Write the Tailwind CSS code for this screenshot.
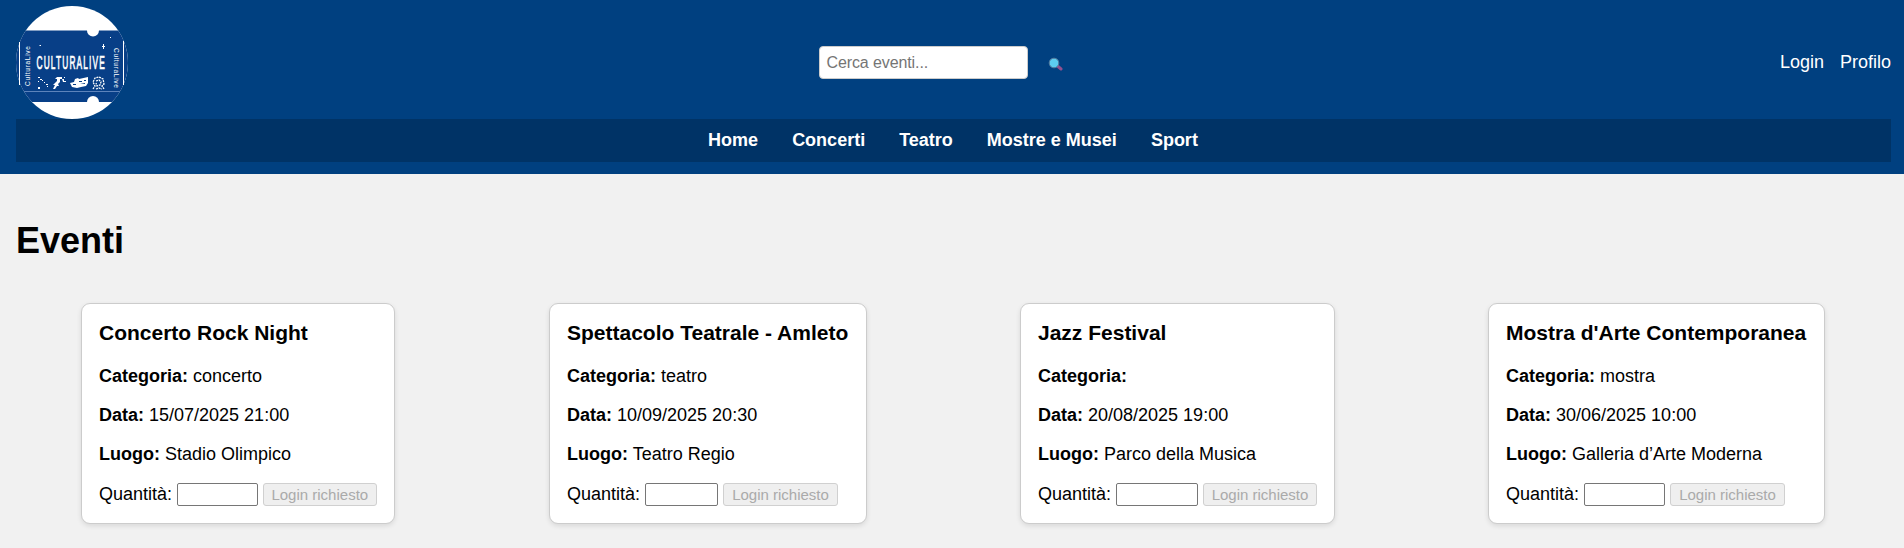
<!DOCTYPE html>
<html lang="it">
<head>
<meta charset="utf-8">
<title>Culturalive - Eventi</title>
<script src="https://cdn.jsdelivr.net/npm/@tailwindcss/browser@4"></script>
</head>
<body class="min-h-screen bg-[#f1f1f1] text-black text-lg leading-5" style="font-family:'Liberation Sans',Arial,sans-serif">
<header class="h-[174px] bg-[#004080] pl-4 pr-[13px] pt-1.5 text-white">
  <div class="flex h-[113px] items-center justify-between">
    <div class="w-[112px]">
      <svg class="block h-[113px] w-[112px] overflow-visible" viewBox="16 6 112 113">
        <defs><clipPath id="c"><ellipse cx="72" cy="62.5" rx="56" ry="56.5"/></clipPath></defs>
        <g clip-path="url(#c)">
          <rect x="16" y="6" width="112" height="113" fill="#fff"/>
          <rect x="16" y="30.500" width="112" height="71.500" fill="#083f87"/>
          <circle cx="93" cy="30.500" r="6" fill="#fff"/>
          <circle cx="93" cy="102" r="6" fill="#fff"/>
          <path d="M24 91.500H120" stroke="#5d83bb"/>
        </g>
        <path d="M19.500 42V85M123.500 41V85" stroke="#fff"/>
        <g fill="#fff">
          <text transform="translate(36.500 68.500) scale(.463 1)" font-size="18" letter-spacing="2.500" stroke="#fff" stroke-width=".7">CULTURALIVE</text>
          <text transform="translate(30 86) rotate(-90)" font-size="6.500" letter-spacing=".7">CulturaLive</text>
          <text transform="translate(114 48) rotate(90)" font-size="6.500" letter-spacing=".7">CulturaLive</text>
          <path d="M103 44h1v2h1v1h-1v2h-1v-2h-1v-1h1zM39 46l1-1h1v1zM110 37h1v1h-1z"/>
          <path d="M38 77h2v1h-2zM40 79h2v1h-2zM38 81h1v1h-1zM38 87h2v2h-2zM44 82h1v1h-1zM46 84h2v1h-2zM42 80h1v1h-1zM47 86h1v1h-1z"/>
          <path d="M57 77h5v2h-2v3l-2 2 1 2h-2l-2 3h-2l2-4h-2l4-4v-2h-2zM62 79h2v2h2v1h-3zM64 77h1v1h-1z"/>
          <path d="M70 83l4-1 1-3 3-1 1 1 9-2v6l-2 3-5 1-4 1-5-1zM79 81v1h3v-1zM84 80v1h2v-1zM80 84l5-1v1zM73 84v1h3v-1z" fill-rule="evenodd"/>
        </g>
        <g fill="none" stroke="#fff" stroke-width="1.300" stroke-dasharray="2 .8">
          <path d="M93 89l2-3-2-4 2-4 4-1 4 2 1 5-2 2 2 3M96 81l3-1 2 2-1 3-3 1-1-3M96 89l3-1 3 1"/>
        </g>
      </svg>
    </div>
    <div class="flex items-center pr-6">
      <input class="h-[33px] w-[209px] rounded-[4px] border border-[#ccc] bg-white px-1.5 text-base tracking-[-0.1px] placeholder:text-[#757575]" placeholder="Cerca eventi...">
      <svg class="ml-5 h-4 w-4" viewBox="0 -2 16 16"><path d="M9.500 9L13 12" stroke="#92508e" stroke-width="3" stroke-linecap="round"/><circle cx="6" cy="6" r="4.800" fill="#5dcdf0" stroke="#557b9e"/></svg>
    </div>
    <div class="flex gap-4 pb-px"><a>Login</a><a>Profilo</a></div>
  </div>
  <nav class="flex h-[43px] items-center justify-center gap-[34px] bg-[#003366] pr-px pb-px font-bold">
    <a>Home</a><a>Concerti</a><a>Teatro</a><a>Mostre e Musei</a><a>Sport</a>
  </nav>
</header>
<main class="pl-4 pt-[46px]">
  <h1 class="text-4xl leading-[41px] font-bold">Eventi</h1>
  <section class="mt-[42px] flex pl-[65px]">
    <article class="mr-[154px] h-[221px] w-[314px] rounded-[9px] border border-[#ccc] bg-white px-[17px] pt-[17px] shadow-[0_2px_5px_rgba(0,0,0,0.1)]">
      <h3 class="text-[21px] leading-[23px] font-bold whitespace-nowrap">Concerto Rock Night</h3>
      <p class="mt-[22px]"><b>Categoria:</b> concerto</p><p class="mt-[19px]"><b>Data:</b> 15/07/2025 21:00</p><p class="mt-[19px]"><b>Luogo:</b> Stadio Olimpico</p>
      <div class="mt-[19px] flex items-center"><span class="w-[78px] pb-px">Quantità:</span><input class="h-[23px] w-[81px] rounded-[2px] border border-[#767676] bg-white"><button disabled class="ml-[5px] h-[23px] w-[115px] rounded-[3px] border border-[#d0d0d0] bg-[#efefef] text-[15px] whitespace-nowrap text-[#aaa]">Login richiesto</button></div>
    </article>
    <article class="mr-[153px] h-[221px] w-[318px] rounded-[9px] border border-[#ccc] bg-white px-[17px] pt-[17px] shadow-[0_2px_5px_rgba(0,0,0,0.1)]">
      <h3 class="text-[21px] leading-[23px] font-bold whitespace-nowrap">Spettacolo Teatrale - Amleto</h3>
      <p class="mt-[22px]"><b>Categoria:</b> teatro</p><p class="mt-[19px]"><b>Data:</b> 10/09/2025 20:30</p><p class="mt-[19px]"><b>Luogo:</b> Teatro Regio</p>
      <div class="mt-[19px] flex items-center"><span class="w-[78px] pb-px">Quantità:</span><input class="h-[23px] w-[73px] rounded-[2px] border border-[#767676] bg-white"><button disabled class="ml-[5px] h-[23px] w-[115px] rounded-[3px] border border-[#d0d0d0] bg-[#efefef] text-[15px] whitespace-nowrap text-[#aaa]">Login richiesto</button></div>
    </article>
    <article class="mr-[153px] h-[221px] w-[315px] rounded-[9px] border border-[#ccc] bg-white px-[17px] pt-[17px] shadow-[0_2px_5px_rgba(0,0,0,0.1)]">
      <h3 class="text-[21px] leading-[23px] font-bold whitespace-nowrap">Jazz Festival</h3>
      <p class="mt-[22px]"><b>Categoria:</b></p><p class="mt-[19px]"><b>Data:</b> 20/08/2025 19:00</p><p class="mt-[19px]"><b>Luogo:</b> Parco della Musica</p>
      <div class="mt-[19px] flex items-center"><span class="w-[78px] pb-px">Quantità:</span><input class="h-[23px] w-[82px] rounded-[2px] border border-[#767676] bg-white"><button disabled class="ml-[5px] h-[23px] w-[114px] rounded-[3px] border border-[#d0d0d0] bg-[#efefef] text-[15px] whitespace-nowrap text-[#aaa]">Login richiesto</button></div>
    </article>
    <article class="h-[221px] w-[337px] rounded-[9px] border border-[#ccc] bg-white px-[17px] pt-[17px] shadow-[0_2px_5px_rgba(0,0,0,0.1)]">
      <h3 class="text-[21px] leading-[23px] font-bold whitespace-nowrap">Mostra d'Arte Contemporanea</h3>
      <p class="mt-[22px]"><b>Categoria:</b> mostra</p><p class="mt-[19px]"><b>Data:</b> 30/06/2025 10:00</p><p class="mt-[19px]"><b>Luogo:</b> Galleria d’Arte Moderna</p>
      <div class="mt-[19px] flex items-center"><span class="w-[78px] pb-px">Quantità:</span><input class="h-[23px] w-[81px] rounded-[2px] border border-[#767676] bg-white"><button disabled class="ml-[5px] h-[23px] w-[115px] rounded-[3px] border border-[#d0d0d0] bg-[#efefef] text-[15px] whitespace-nowrap text-[#aaa]">Login richiesto</button></div>
    </article>
  </section>
</main>
</body>
</html>
